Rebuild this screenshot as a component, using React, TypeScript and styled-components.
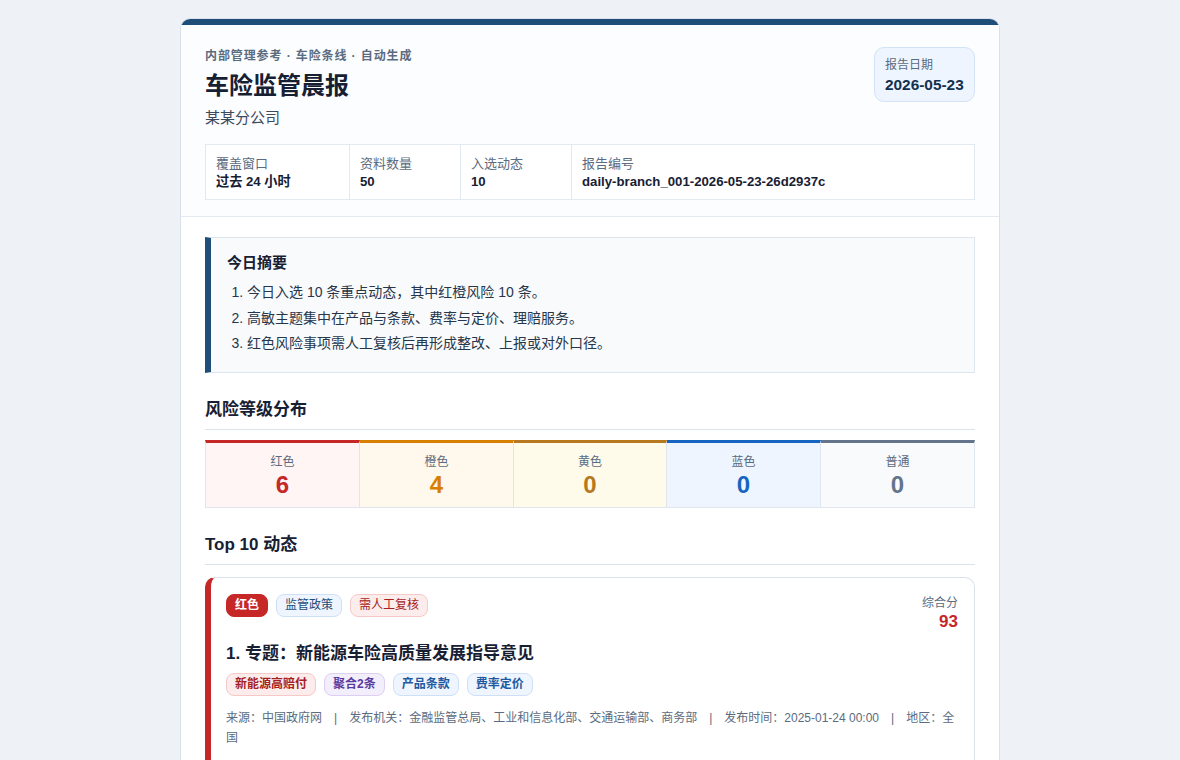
import React from 'react';
import styled, { createGlobalStyle } from 'styled-components';

const GlobalStyle = createGlobalStyle`
  html, body {
    margin: 0;
    height: 100%;
    overflow: hidden;
    background: #eef2f7;
  }
  body {
    font-family: "Liberation Sans", "Noto Sans CJK SC", sans-serif;
    color: #172033;
  }
`;

const Page = styled.div`
  width: 820px;
  margin: 18px auto 0;
`;

const Report = styled.main`
  box-sizing: border-box;
  background: #ffffff;
  border: 1px solid #d9e2ec;
  border-radius: 10px;
  overflow: hidden;
  &::before {
    content: '';
    display: block;
    height: 6px;
    background: #1f4e79;
  }
`;

const Header = styled.header`
  background: #fbfdff;
  border-bottom: 1px solid #e3e9f0;
  padding: 22px 24px 16px;
`;

const HeaderTop = styled.div`
  display: flex;
  justify-content: space-between;
  align-items: flex-start;
`;

const Eyebrow = styled.div`
  margin-top: 1px;
  font-size: 12px;
  line-height: 17px;
  font-weight: 700;
  letter-spacing: 0.9px;
  color: #5b6b80;
`;

const Title = styled.h1`
  margin: 4px 0 0;
  font-size: 24px;
  line-height: 34px;
  font-weight: 700;
  color: #172033;
`;

const Branch = styled.div`
  margin-top: 4px;
  font-size: 15px;
  line-height: 22px;
  color: #3d4a5c;
`;

const DateBox = styled.div`
  box-sizing: border-box;
  width: 101px;
  height: 55px;
  padding: 8px 10px;
  background: #eef5ff;
  border: 1px solid #d3e2f5;
  border-radius: 10px;
`;

const DateLabel = styled.div`
  font-size: 12px;
  line-height: 18px;
  color: #5b6b80;
`;

const DateValue = styled.div`
  margin-top: 1px;
  font-size: 15.4px;
  line-height: 20px;
  font-weight: 700;
  color: #12304f;
`;

const MetaGrid = styled.div`
  display: grid;
  grid-template-columns: 143px 111px 111px 1fr;
  margin-top: 15px;
  background: #ffffff;
  border: 1px solid #e3e9f0;
`;

const MetaCell = styled.div`
  padding: 10px 10px 9px;
  border-left: 1px solid #e3e9f0;
  &:first-child {
    border-left: 0;
  }
`;

const MetaLabel = styled.div`
  font-size: 13px;
  line-height: 18px;
  color: #5b6b80;
`;

const MetaValue = styled.div`
  font-size: 13.2px;
  line-height: 17px;
  font-weight: 700;
  color: #172033;
`;

const Body = styled.div`
  padding: 20px 24px 0;
`;

const Summary = styled.section`
  box-sizing: border-box;
  height: 136px;
  padding: 14px 16px;
  background: #f8fafc;
  border: 1px solid #dde5ee;
  border-left: 6px solid #1f4e79;
`;

const SummaryTitle = styled.div`
  font-size: 15px;
  line-height: 22px;
  font-weight: 700;
  color: #172033;
`;

const SummaryList = styled.ol`
  margin: 6px 0 0;
  padding: 0 0 0 20px;
  font-size: 14px;
  line-height: 25.5px;
  color: #27364a;
`;

const SectionTitle = styled.h2`
  margin: 25px 0 10px;
  padding-bottom: 7px;
  border-bottom: 1px solid #dde3ea;
  font-size: 17px;
  line-height: 24px;
  font-weight: 700;
  color: #172033;
`;

const RiskGrid = styled.div`
  display: grid;
  grid-template-columns: 155px 154px 153px 154px 154px;
`;

const RiskCell = styled.div<{ $bar: string; $bg: string }>`
  box-sizing: border-box;
  height: 68px;
  padding-top: 12px;
  text-align: center;
  background: ${(p) => p.$bg};
  border: 1px solid #dfe6ef;
  border-left-width: 0;
  border-top: 3px solid ${(p) => p.$bar};
  &:first-child {
    border-left-width: 1px;
  }
`;

const RiskLabel = styled.div`
  font-size: 12px;
  line-height: 14px;
  color: #5b6b80;
`;

const RiskValue = styled.div<{ $color: string }>`
  font-size: 24px;
  line-height: 32px;
  font-weight: 700;
  color: ${(p) => p.$color};
`;

const Card = styled.article`
  box-sizing: border-box;
  min-height: 260px;
  margin-top: 12px;
  padding: 16px 16px 16px 15px;
  background: #ffffff;
  border: 1px solid #dbe2ec;
  border-left: 6px solid #c62828;
  border-radius: 10px;
`;

const CardTop = styled.div`
  display: flex;
  justify-content: space-between;
  align-items: flex-start;
`;

const TagRow = styled.div`
  display: flex;
  gap: 8px;
`;

const Tag = styled.span<{ $bg: string; $line: string; $color: string; $bold?: boolean }>`
  box-sizing: border-box;
  height: 23px;
  padding: 0 8px;
  font-size: 12px;
  line-height: 21px;
  font-weight: ${(p) => (p.$bold ? 700 : 400)};
  white-space: nowrap;
  color: ${(p) => p.$color};
  background: ${(p) => p.$bg};
  border: 1px solid ${(p) => p.$line};
  border-radius: 8px;
`;

const Score = styled.div`
  text-align: right;
`;

const ScoreLabel = styled.div`
  font-size: 12px;
  line-height: 18px;
  color: #5b6b80;
`;

const ScoreValue = styled.div`
  font-size: 17px;
  line-height: 20px;
  font-weight: 700;
  color: #c62828;
`;

const CardTitle = styled.h3`
  margin: 10px 0 7px;
  font-size: 17px;
  line-height: 24px;
  font-weight: 700;
  color: #172033;
`;

const MetaLine = styled.p`
  margin: 12px 0 0;
  font-size: 12px;
  line-height: 20px;
  color: #5b6b80;
`;

const Sep = styled.span`
  margin: 0 12px;
`;

const risks = [
  { label: '红色', value: 6, bar: '#c62828', bg: '#fff5f5' },
  { label: '橙色', value: 4, bar: '#d97f00', bg: '#fff8ec' },
  { label: '黄色', value: 0, bar: '#b7791f', bg: '#fffbea' },
  { label: '蓝色', value: 0, bar: '#1565c0', bg: '#eef5ff' },
  { label: '普通', value: 0, bar: '#64748b', bg: '#f8fafc' },
];

const palette = {
  red: { $bg: '#fdecec', $line: '#f6c9c9', $color: '#a61e1e' },
  blue: { $bg: '#eef5ff', $line: '#cfe0f5', $color: '#1f5aa0' },
  navy: { $bg: '#eef5ff', $line: '#cfe0f5', $color: '#1f4e79' },
  purple: { $bg: '#f3eefc', $line: '#dccff2', $color: '#5b3a9e' },
};

export default function App() {
  return (
    <Page>
      <GlobalStyle />
      <Report>
        <Header>
          <HeaderTop>
            <div>
              <Eyebrow>内部管理参考 · 车险条线 · 自动生成</Eyebrow>
              <Title>车险监管晨报</Title>
              <Branch>某某分公司</Branch>
            </div>
            <DateBox>
              <DateLabel>报告日期</DateLabel>
              <DateValue>2026-05-23</DateValue>
            </DateBox>
          </HeaderTop>
          <MetaGrid>
            <MetaCell>
              <MetaLabel>覆盖窗口</MetaLabel>
              <MetaValue>过去 24 小时</MetaValue>
            </MetaCell>
            <MetaCell>
              <MetaLabel>资料数量</MetaLabel>
              <MetaValue>50</MetaValue>
            </MetaCell>
            <MetaCell>
              <MetaLabel>入选动态</MetaLabel>
              <MetaValue>10</MetaValue>
            </MetaCell>
            <MetaCell>
              <MetaLabel>报告编号</MetaLabel>
              <MetaValue>daily-branch_001-2026-05-23-26d2937c</MetaValue>
            </MetaCell>
          </MetaGrid>
        </Header>
        <Body>
          <Summary>
            <SummaryTitle>今日摘要</SummaryTitle>
            <SummaryList>
              <li>今日入选 10 条重点动态，其中红橙风险 10 条。</li>
              <li>高敏主题集中在产品与条款、费率与定价、理赔服务。</li>
              <li>红色风险事项需人工复核后再形成整改、上报或对外口径。</li>
            </SummaryList>
          </Summary>

          <SectionTitle>风险等级分布</SectionTitle>
          <RiskGrid>
            {risks.map((r) => (
              <RiskCell key={r.label} $bar={r.bar} $bg={r.bg}>
                <RiskLabel>{r.label}</RiskLabel>
                <RiskValue $color={r.bar}>{r.value}</RiskValue>
              </RiskCell>
            ))}
          </RiskGrid>

          <SectionTitle>Top 10 动态</SectionTitle>
          <Card>
            <CardTop>
              <TagRow>
                <Tag $bg="#c62828" $line="#c62828" $color="#ffffff" $bold>红色</Tag>
                <Tag {...palette.navy}>监管政策</Tag>
                <Tag {...palette.red}>需人工复核</Tag>
              </TagRow>
              <Score>
                <ScoreLabel>综合分</ScoreLabel>
                <ScoreValue>93</ScoreValue>
              </Score>
            </CardTop>
            <CardTitle>1. 专题：新能源车险高质量发展指导意见</CardTitle>
            <TagRow>
              <Tag {...palette.red} $bold>新能源高赔付</Tag>
              <Tag {...palette.purple} $bold>聚合2条</Tag>
              <Tag {...palette.blue} $bold>产品条款</Tag>
              <Tag {...palette.blue} $bold>费率定价</Tag>
            </TagRow>
            <MetaLine>
              来源：中国政府网<Sep>|</Sep>发布机关：金融监管总局、工业和信息化部、交通运输部、商务部<Sep>|</Sep>发布时间：2025-01-24 00:00<Sep>|</Sep>地区：全国
            </MetaLine>
          </Card>
        </Body>
      </Report>
    </Page>
  );
}
